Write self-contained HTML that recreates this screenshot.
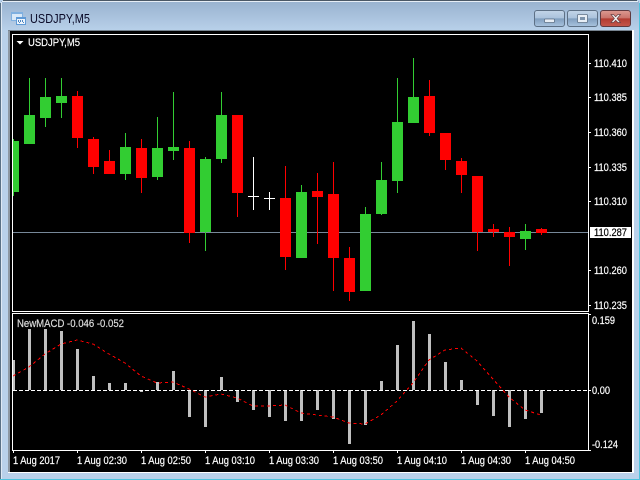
<!DOCTYPE html>
<html><head><meta charset="utf-8"><style>
html,body{margin:0;padding:0;background:#000;width:640px;height:480px;overflow:hidden}
svg{display:block}
text{font-family:"Liberation Sans",sans-serif;font-size:11px;fill:#fff;stroke:#fff;stroke-width:.2px}
</style></head><body>
<svg width="640" height="480" viewBox="0 0 640 480" xmlns="http://www.w3.org/2000/svg">
<defs>
<linearGradient id="tb" x1="0" y1="0" x2="0" y2="1"><stop offset="0" stop-color="#98b2cf"/><stop offset="1" stop-color="#b9d1ea"/></linearGradient>
<linearGradient id="btn" x1="0" y1="0" x2="0" y2="1"><stop offset="0" stop-color="#c3d5e8"/><stop offset=".48" stop-color="#aac2dc"/><stop offset=".5" stop-color="#7f9dbd"/><stop offset="1" stop-color="#a9c3de"/></linearGradient>
<linearGradient id="cl" x1="0" y1="0" x2="0" y2="1"><stop offset="0" stop-color="#dc9a92"/><stop offset=".48" stop-color="#c9736a"/><stop offset=".5" stop-color="#b23a30"/><stop offset="1" stop-color="#c4574c"/></linearGradient>
</defs>
<rect width="640" height="480" fill="#b9d1ea"/>
<rect x="1" y="1" width="638" height="30" fill="url(#tb)"/>
<g shape-rendering="crispEdges">
<rect x="3" y="0" width="634" height="1" fill="#4a5866"/>
<rect x="2" y="1" width="636" height="1" fill="#e6eef6"/>
<rect x="0" y="3" width="1" height="476" fill="#5a7186"/>
<rect x="1" y="2" width="1" height="477" fill="#dfe9f4"/>
<rect x="639" y="3" width="1" height="477" fill="#4fc3dd"/>
<rect x="0" y="479" width="640" height="1" fill="#4fc3dd"/>
<rect x="8" y="30" width="626" height="443" fill="#fff"/>
<rect x="8" y="30" width="624" height="1" fill="#76838f"/>
<rect x="8" y="31" width="2" height="441" fill="#8d98a3"/>
<rect x="10" y="31" width="622" height="441" fill="#000"/>

<path fill="none" stroke="#fff" d="M12.5 34.5H588.5V311.5H12.5ZM12.5 313.5H588.5V450.5H12.5Z"/>
<path fill="#fff" d="M589 63h2v1h-2zM589 97h2v1h-2zM589 132h2v1h-2zM589 167h2v1h-2zM589 201h2v1h-2zM589 270h2v1h-2zM589 305h2v1h-2zM589 314h2v1h-2zM589 390h2v1h-2zM589 450h2v1h-2z"/>
<path fill="#fff" d="M13 451h1v2h-1zM77 451h1v2h-1zM141 451h1v2h-1zM205 451h1v2h-1zM269 451h1v2h-1zM333 451h1v2h-1zM397 451h1v2h-1zM461 451h1v2h-1zM525 451h1v2h-1z"/>

<rect x="13" y="232" width="575" height="1" fill="#778899"/>

<path fill="#32cd32" d="M13 139h1v57h-1zM29 78h1v66h-1zM45 78h1v49h-1zM61 78h1v40h-1zM125 133h1v47h-1zM157 117h1v63h-1zM173 92h1v68h-1zM205 157h1v94h-1zM221 92h1v71h-1zM301 185h1v73h-1zM365 207h1v84h-1zM381 162h1v53h-1zM397 78h1v115h-1zM413 58h1v65h-1zM525 224h1v26h-1z
M13 141h6v51h-6zM24 115h11v29h-11zM40 97h11v21h-11zM56 96h11v7h-11zM120 147h11v27h-11zM152 148h11v29h-11zM168 147h11v4h-11zM200 159h11v73h-11zM216 115h11v44h-11zM296 192h11v66h-11zM360 214h11v77h-11zM376 180h11v34h-11zM392 122h11v59h-11zM408 97h11v26h-11zM520 231h11v8h-11z"/>
<path fill="#f00" d="M77 91h1v57h-1zM93 137h1v37h-1zM109 150h1v24h-1zM141 139h1v54h-1zM189 141h1v102h-1zM237 115h1v102h-1zM285 166h1v104h-1zM317 173h1v71h-1zM333 162h1v129h-1zM349 247h1v54h-1zM429 80h1v56h-1zM445 133h1v37h-1zM461 158h1v35h-1zM477 176h1v75h-1zM493 224h1v13h-1zM509 227h1v39h-1zM541 228h1v7h-1z
M72 96h11v42h-11zM88 139h11v28h-11zM104 161h11v13h-11zM136 148h11v30h-11zM184 148h11v85h-11zM232 115h11v78h-11zM280 198h11v59h-11zM312 191h11v6h-11zM328 194h11v64h-11zM344 258h11v34h-11zM424 96h11v37h-11zM440 133h11v27h-11zM456 161h11v14h-11zM472 176h11v56h-11zM488 229h11v3h-11zM504 232h11v5h-11zM536 229h11v4h-11z"/>
<path fill="#fff" d="M253 157h1v53h-1zM248 196h11v1h-11zM269 192h1v18h-1zM264 198h11v1h-11z"/>

<path fill="#c0c0c0" d="M13 360h2v30h-2zM28 329h3v61h-3zM44 329h3v61h-3zM60 331h3v59h-3zM76 349h3v41h-3zM92 376h3v14h-3zM108 383h3v7h-3zM124 383h3v7h-3zM140 390h3v2h-3zM156 382h3v8h-3zM172 371h3v19h-3zM188 390h3v27h-3zM204 390h3v37h-3zM220 377h3v13h-3zM236 390h3v12h-3zM252 390h3v20h-3zM268 390h3v27h-3zM284 390h3v31h-3zM300 390h3v31h-3zM316 390h3v20h-3zM332 390h3v29h-3zM348 390h3v54h-3zM364 390h3v35h-3zM380 381h3v9h-3zM396 345h3v45h-3zM412 321h3v69h-3zM428 334h3v56h-3zM444 362h3v28h-3zM460 380h3v10h-3zM476 390h3v15h-3zM492 390h3v26h-3zM508 390h3v37h-3zM524 390h3v29h-3zM540 390h3v23h-3z"/>
<line x1="13" y1="390.5" x2="588" y2="390.5" stroke="#fff" stroke-dasharray="4 2"/>
<polyline fill="none" stroke="#f00" stroke-width="1" stroke-dasharray="3 3" points="13,376 29,367 45,354 61,344 77,340 93,344 109,354 125,363 141,376 157,383 173,382 189,389 205,397 221,394 237,398 253,406 269,406 285,405 301,413 317,415 333,417 349,423 365,424 381,415 397,401 413,383 429,360 445,350 461,348 477,361 493,379 509,397 525,410 541,415"/>
</g>

<rect x="590" y="227" width="41" height="11" fill="#fff"/>
<text x="594" y="67" textLength="33" lengthAdjust="spacingAndGlyphs">110.410</text>
<text x="594" y="101" textLength="33" lengthAdjust="spacingAndGlyphs">110.385</text>
<text x="594" y="136" textLength="33" lengthAdjust="spacingAndGlyphs">110.360</text>
<text x="594" y="171" textLength="33" lengthAdjust="spacingAndGlyphs">110.335</text>
<text x="594" y="205" textLength="33" lengthAdjust="spacingAndGlyphs">110.310</text>
<text x="594" y="236" textLength="33" lengthAdjust="spacingAndGlyphs" style="fill:#000;stroke:#000">110.287</text>
<text x="594" y="274" textLength="33" lengthAdjust="spacingAndGlyphs">110.260</text>
<text x="594" y="309" textLength="33" lengthAdjust="spacingAndGlyphs">110.235</text>
<text x="592" y="324" textLength="23" lengthAdjust="spacingAndGlyphs">0.159</text>
<text x="592" y="394" textLength="18" lengthAdjust="spacingAndGlyphs">0.00</text>
<text x="592" y="448" textLength="26" lengthAdjust="spacingAndGlyphs">-0.124</text>
<text x="28" y="46" textLength="52" lengthAdjust="spacingAndGlyphs">USDJPY,M5</text>
<text x="17" y="327" textLength="107" lengthAdjust="spacingAndGlyphs" style="fill:#dcdcdc;stroke:#dcdcdc">NewMACD -0.046 -0.052</text>
<text x="13" y="464" textLength="47" lengthAdjust="spacingAndGlyphs">1 Aug 2017</text>
<text x="77" y="464" textLength="50" lengthAdjust="spacingAndGlyphs">1 Aug 02:30</text>
<text x="141" y="464" textLength="50" lengthAdjust="spacingAndGlyphs">1 Aug 02:50</text>
<text x="205" y="464" textLength="50" lengthAdjust="spacingAndGlyphs">1 Aug 03:10</text>
<text x="269" y="464" textLength="50" lengthAdjust="spacingAndGlyphs">1 Aug 03:30</text>
<text x="333" y="464" textLength="50" lengthAdjust="spacingAndGlyphs">1 Aug 03:50</text>
<text x="397" y="464" textLength="50" lengthAdjust="spacingAndGlyphs">1 Aug 04:10</text>
<text x="461" y="464" textLength="50" lengthAdjust="spacingAndGlyphs">1 Aug 04:30</text>
<text x="525" y="464" textLength="50" lengthAdjust="spacingAndGlyphs">1 Aug 04:50</text>
<path fill="#fff" d="M16.5 41h7l-3.5 3.5z"/>

<text x="30" y="23" textLength="60" lengthAdjust="spacingAndGlyphs" style="font-size:12.5px;fill:#0a0a28;stroke:none">USDJPY,M5</text>

<g shape-rendering="crispEdges">
<rect x="11" y="12" width="12" height="9" fill="#7fb0e0"/>
<rect x="12" y="14" width="10" height="6" fill="#d9e9f8"/>
<rect x="16" y="17" width="10" height="8" fill="#5f9ad6"/>
<rect x="17" y="19" width="8" height="5" fill="#eef5fc"/>
<path fill="#4f86c0" d="M18 20h1v2h-1zM19 22h1v1h-1zM20 20h1v2h-1zM22 20h1v2h-1zM23 22h1v1h-1z"/>
</g>

<rect x="534.5" y="10.5" width="30" height="16" rx="2.5" fill="url(#btn)" stroke="#5d7085"/>
<rect x="567.5" y="10.5" width="30" height="16" rx="2.5" fill="url(#btn)" stroke="#5d7085"/>
<rect x="600.5" y="10.5" width="30" height="16" rx="2.5" fill="url(#cl)" stroke="#5f3a40"/>
<rect x="544.5" y="19" width="10" height="3.5" rx="1" fill="#e8eef5" stroke="#5d7085" stroke-width=".8"/>
<rect x="577.5" y="14.5" width="10" height="8" rx="1" fill="#e8eef5" stroke="#5d7085" stroke-width=".8"/>
<rect x="580" y="17" width="5" height="3" fill="#7f95ad"/>
<path d="M611 14.5l2.5 0 2.2 2.2 2.2-2.2 2.6 0 -3.4 4 3.4 4 -2.6 0 -2.2-2.2 -2.2 2.2 -2.5 0 3.4-4z" fill="#f2f2f2" stroke="#6a4044" stroke-width=".7"/>
</svg>
</body></html>
